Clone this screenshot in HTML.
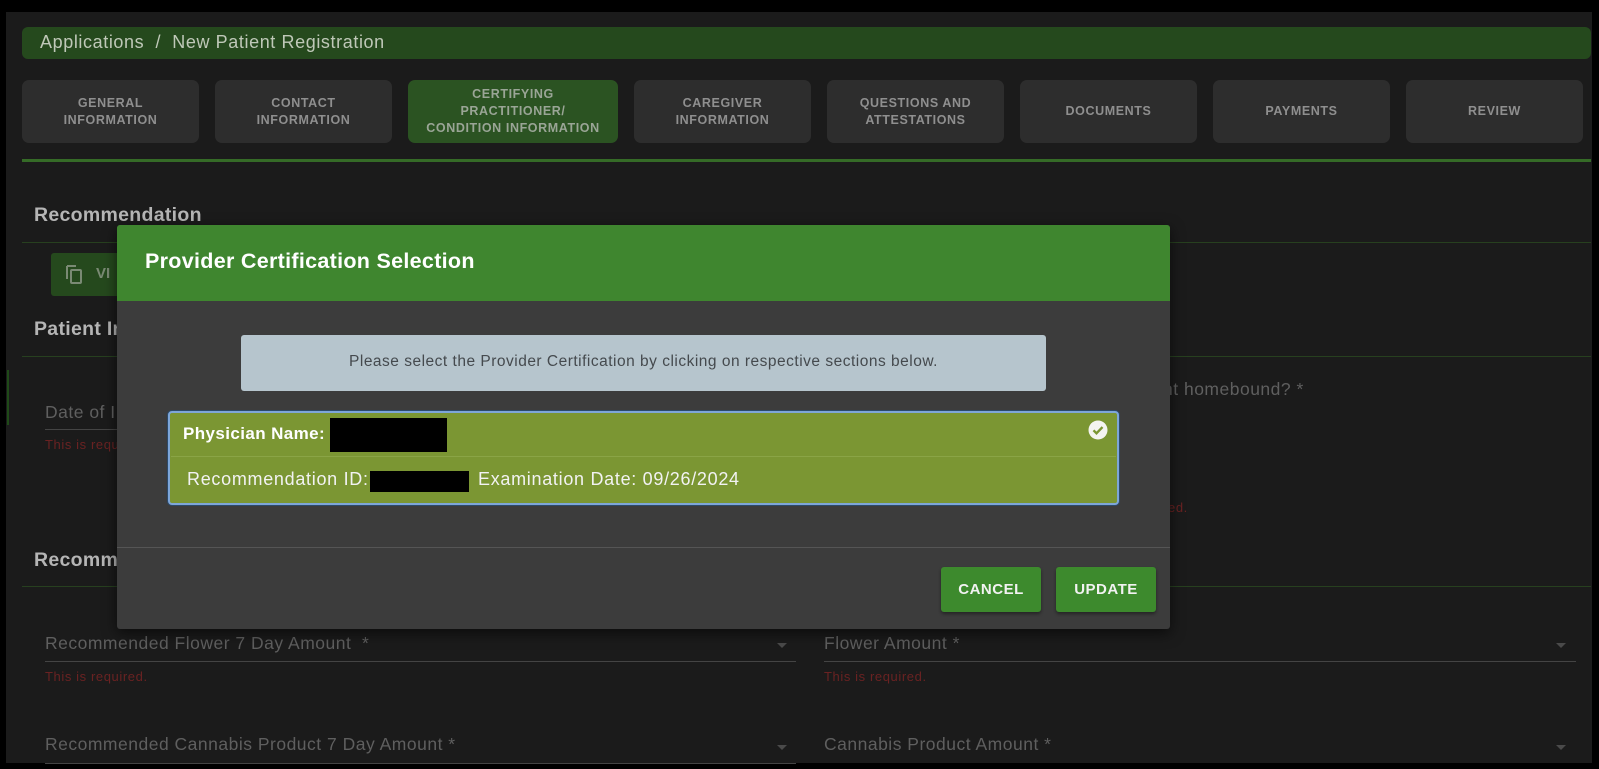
<!DOCTYPE html>
<html><head><meta charset="utf-8"><style>
*{box-sizing:border-box;margin:0;padding:0}
body{width:1599px;height:769px;background:#000;position:relative;overflow:hidden;font-family:"Liberation Sans",sans-serif}
.a{position:absolute;white-space:nowrap}
.panel{left:6px;top:12px;width:1586px;height:751px;background:#1b1b1b}
.crumb{left:22px;top:27px;width:1569px;height:32px;background:#25491d;border-radius:6px;color:#bfc8b8;font-size:18px;letter-spacing:.6px;padding:5px 18px}
.tab{top:80px;height:63px;width:177px;background:#2d2d2d;border-radius:7px;color:#8f8f8f;font-size:12.5px;letter-spacing:.6px;font-weight:bold;display:flex;align-items:center;justify-content:center;text-align:center;line-height:17px}
.tab.act{background:#2b5322;color:#9aa596}
.h{font-size:19.5px;letter-spacing:.3px;font-weight:bold;color:#b5b5b5}
.ln{height:1px;background:#27401f}
.lbl{font-size:17.5px;letter-spacing:.5px;color:#5f5f5f}
.req{font-size:13px;letter-spacing:.6px;color:#6a2222}
.ul{height:1px;background:#444}
.arr{width:0;height:0;border-left:5px solid transparent;border-right:5px solid transparent;border-top:5px solid #4a4a4a}
.modal{left:117px;top:225px;width:1053px;height:404px;background:#3c3c3c;border-radius:3px;box-shadow:0 4px 14px rgba(0,0,0,.6)}
.btn{top:567px;height:45px;width:100px;background:#3d8a2d;border-radius:3px;color:#f2f2f2;font-size:15px;font-weight:bold;display:flex;align-items:center;justify-content:center;letter-spacing:.5px;box-shadow:0 2px 3px rgba(0,0,0,.4)}
</style></head><body>
<div class="a panel"></div>
<div class="a crumb">Applications &nbsp;/&nbsp; New Patient Registration</div>
<div class="a tab" style="left:22px">GENERAL<br>INFORMATION</div>
<div class="a tab" style="left:215px">CONTACT<br>INFORMATION</div>
<div class="a tab act" style="left:408px;width:210px">CERTIFYING<br>PRACTITIONER/<br>CONDITION INFORMATION</div>
<div class="a tab" style="left:634px">CAREGIVER<br>INFORMATION</div>
<div class="a tab" style="left:827px">QUESTIONS AND<br>ATTESTATIONS</div>
<div class="a tab" style="left:1020px">DOCUMENTS</div>
<div class="a tab" style="left:1213px">PAYMENTS</div>
<div class="a tab" style="left:1406px">REVIEW</div>
<div class="a" style="left:22px;top:159px;width:1569px;height:3px;background:#356b27"></div>

<div class="a h" style="left:34px;top:204px">Recommendation</div>
<div class="a ln" style="left:22px;top:242px;width:1569px"></div>
<div class="a" style="left:51px;top:253px;width:80px;height:43px;background:#25491d;border-radius:3px"></div>
<svg class="a" style="left:64px;top:263px" width="20" height="22" viewBox="0 0 20 22"><path d="M3 3h9M3 3v13" stroke="#7a8a74" stroke-width="2" fill="none"/><rect x="7" y="7" width="10" height="13" rx="1" stroke="#7a8a74" stroke-width="2" fill="none"/></svg>
<div class="a" style="left:96px;top:265px;color:#7a8a74;font-size:15px;font-weight:bold">VI</div>
<div class="a h" style="left:34px;top:318px">Patient In</div>
<div class="a ln" style="left:22px;top:356px;width:1569px"></div>
<div class="a" style="left:7px;top:370px;width:2px;height:55px;background:#1f4a18"></div>
<div class="a lbl" style="left:45px;top:402px">Date of I</div>
<div class="a ul" style="left:45px;top:429px;width:80px"></div>
<div class="a req" style="left:45px;top:437px">This is requ</div>
<div class="a lbl" style="left:1163px;top:379px">nt homebound? *</div>
<div class="a req" style="left:1168px;top:500px">ed.</div>
<div class="a h" style="left:34px;top:549px">Recomm</div>
<div class="a ln" style="left:22px;top:586px;width:1569px"></div>
<div class="a lbl" style="left:45px;top:633px">Recommended Flower 7 Day Amount &nbsp;*</div>
<div class="a arr" style="left:777px;top:643px"></div>
<div class="a ul" style="left:45px;top:661px;width:751px"></div>
<div class="a req" style="left:45px;top:669px">This is required.</div>
<div class="a lbl" style="left:824px;top:633px">Flower Amount *</div>
<div class="a arr" style="left:1556px;top:643px"></div>
<div class="a ul" style="left:824px;top:661px;width:752px"></div>
<div class="a req" style="left:824px;top:669px">This is required.</div>
<div class="a lbl" style="left:45px;top:734px">Recommended Cannabis Product 7 Day Amount *</div>
<div class="a arr" style="left:777px;top:745px"></div>
<div class="a ul" style="left:45px;top:763px;width:751px"></div>
<div class="a lbl" style="left:824px;top:734px">Cannabis Product Amount *</div>
<div class="a arr" style="left:1556px;top:745px"></div>

<div class="a modal">
 <div style="height:76px;background:#3f862f;border-radius:3px 3px 0 0;color:#fff;font-size:21.5px;letter-spacing:.3px;font-weight:bold;padding:24px 0 0 28px">Provider Certification Selection</div>
</div>
<div class="a" style="left:241px;top:335px;width:805px;height:56px;background:#b6c5cd;border-radius:3px;color:#454a4e;font-size:15.5px;letter-spacing:.5px;text-align:center;padding-top:18px">Please select the Provider Certification by clicking on respective sections below.</div>
<div class="a" style="left:168px;top:411px;width:951px;height:94px;background:#7b9633;border:2px solid #7ea6d8;border-radius:4px;box-shadow:0 0 0 1px #2c4a6a"></div>
<div class="a" style="left:171px;top:456px;width:945px;height:1px;background:#8aa446"></div>
<div class="a" style="left:183px;top:424px;color:#fff;font-size:17px;letter-spacing:.4px;font-weight:bold">Physician Name:</div>
<div class="a" style="left:330px;top:418px;width:117px;height:34px;background:#000"></div>
<svg class="a" style="left:1088px;top:420px" width="20" height="20" viewBox="0 0 20 20"><circle cx="10" cy="10" r="9.5" fill="#f4f4f0"/><path d="M5.5 10.3l3 3 6-6.2" stroke="#7b9633" stroke-width="2.4" fill="none"/></svg>
<div class="a" style="left:187px;top:469px;color:#f2f2f2;font-size:18px;letter-spacing:.7px">Recommendation ID:</div>
<div class="a" style="left:370px;top:471px;width:99px;height:21px;background:#000"></div>
<div class="a" style="left:478px;top:469px;color:#f2f2f2;font-size:18px;letter-spacing:.7px">Examination Date: 09/26/2024</div>
<div class="a" style="left:117px;top:547px;width:1053px;height:1px;background:#555"></div>
<div class="a btn" style="left:941px">CANCEL</div>
<div class="a btn" style="left:1056px">UPDATE</div>
</body></html>
